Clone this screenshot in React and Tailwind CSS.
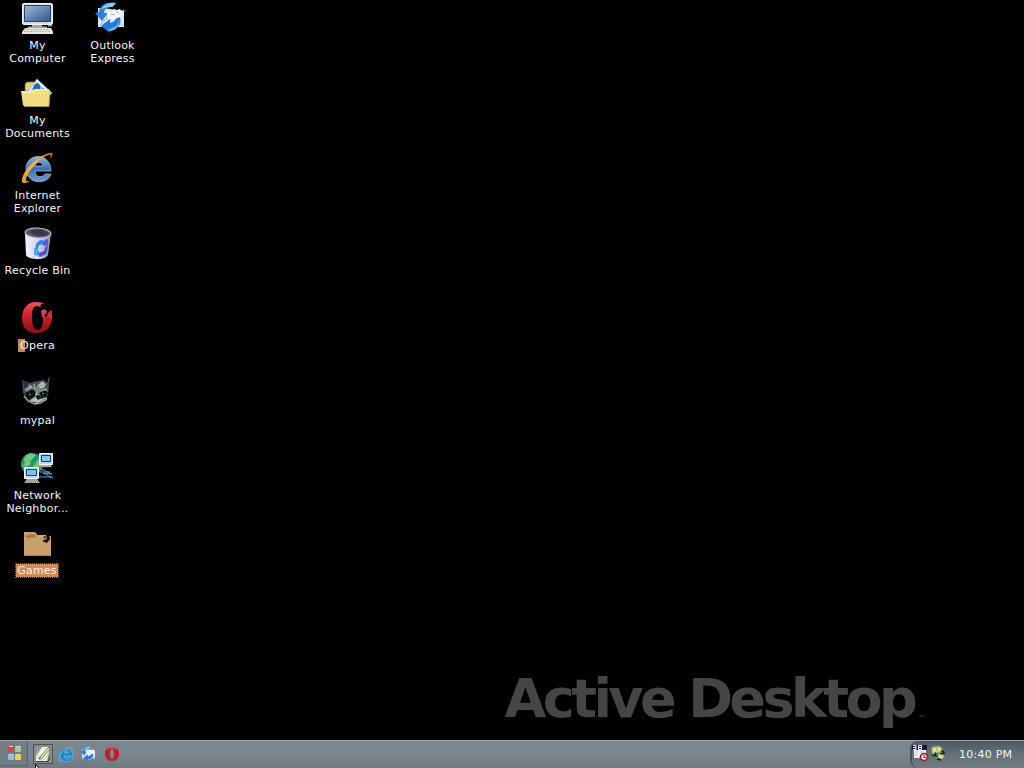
import React from "react";

const Svg = ({ children, className = "h-8 w-8", box = "0 0 32 32" }) => (
  <svg viewBox={box} className={`block shrink-0 overflow-visible ${className}`}>{children}</svg>
);

const Computer = () => (
  <Svg>
    <defs>
      <linearGradient id="screen" x1="0" y1="0" x2="1" y2="1">
        <stop stopColor="#9fb9d6" /><stop offset=".5" stopColor="#6688b4" /><stop offset="1" stopColor="#305686" />
      </linearGradient>
    </defs>
    <rect x="1.5" y="1.5" width="30" height="21" rx="1.5" fill="#d9dedc" stroke="#f4f4ee" />
    <path d="M3.5 3.5h26v16h-26z" fill="url(#screen)" stroke="#26405f" />
    <path d="M11 23h10v1.500h5v1.500H7v-1.500h4z" fill="#a4a69f" />
    <path d="M4 26h26l2 4v2H1v-2z" fill="#e8e8df" />
    <path d="M4 27.500h25M3 29.500h27" stroke="#b0b1a9" strokeDasharray="2 1" />
    <path d="M27 23h4v1.500h-4z" fill="#8da38a" />
  </Svg>
);

const OutlookArt = () => (
  <>
    <path d="M4 6h7l15 3 4-1v17H4z" fill="#dbe6fb" />
    <path d="m5 24 8-8m16 8-7-7M5 7l8 8" stroke="#9bb3e0" fill="none" />
    <path d="M22 1C14-1 6 2 5 10l-4 1 7 8 6-8h-4c0-4 4-6 9-6z" fill="#2f80dc" />
    <path d="M22 1C15 0 9 3 7 8c4-3 7-3 11-3z" fill="#8cc8fb" />
    <path d="M26 15c2 8-3 13-10 14v2l-9-7 9-7v4c4-1 6-3 6-7z" fill="#2579d8" />
    <path d="M25 17c0 6-4 9-10 10l1 2c7-1 10-6 9-12z" fill="#79bdf8" />
    <path d="m13 11 5-2 2-2 3 1 3-1 2 3-1 5-4 1-3 2-6-2z" fill="#fafaff" />
    <path d="m17 12 4 1m1-4 3 3" stroke="#9aa7bd" fill="none" />
  </>
);
const Outlook = () => (
  <Svg>
    <OutlookArt />
    <path d="M31 7v3" stroke="#354052" />
  </Svg>
);

const Documents = () => (
  <Svg>
    <path d="M4 14V7l2-2h7l3 3v7z" fill="#e5d477" stroke="#776c36" strokeWidth=".7" />
    <path d="m7 14 9-12 15 14-5 5z" fill="#e9f4fc" stroke="#9ab1c9" strokeWidth=".7" />
    <path d="m10 13 6-8 9 9-3 3z" fill="#83b5dd" />
    <path d="m13 8 3-2 3 2v4l-3 2-4-2z" fill="#246baa" />
    <path d="m22 11 4 4M21 13l5 5" stroke="#5f7f9c" />
    <path d="M0 14h11l3-2h14l1 3-1 14-1 1H4l-2-2z" fill="#f1df84" />
    <path d="M1 15h11l3-2h12" stroke="#fff7bd" fill="none" />
    <path d="M4 29.5h24l1-14" stroke="#a28e3f" fill="none" />
    <path d="M3 18h24M4 21h23M4 24h23M5 27h21" stroke="#e1ca69" strokeDasharray="1 2" />
  </Svg>
);

const Explorer = () => (
  <Svg>
    <defs>
      <linearGradient id="ieBlue" x2="0" y2="1"><stop stopColor="#87b3e6" /><stop offset=".5" stopColor="#3e6eac" /><stop offset="1" stopColor="#6f9ed5" /></linearGradient>
      <linearGradient id="orbit" x1="1" x2="0" y2="1"><stop stopColor="#b8651d" /><stop offset=".5" stopColor="#ffc75a" /><stop offset="1" stopColor="#e18b21" /></linearGradient>
    </defs>
    <path d="M30 19H14c0 7 8 7 10 3h6c-4 12-25 10-25-5C5 0 30 0 30 19M14 14h8c-1-5-7-5-8 0" fill="url(#ieBlue)" fillRule="evenodd" stroke="#a6c4e9" strokeWidth=".7" />
    <path d="M29 7c3-4 4-7 0-6C21 2 6 13 2 24c-3 7 0 9 7 5-4 1-5 0-3-5C10 15 20 5 28 3c2-1 2 1 1 4" fill="url(#orbit)" />
    <path d="M4 30C-2 29 8 12 22 4" stroke="#f6a341" fill="none" strokeWidth="1.4" />
  </Svg>
);

const Recycle = () => (
  <Svg>
    <defs><linearGradient id="bin"><stop stopColor="#f5f3ff" /><stop offset=".55" stopColor="#d4d1e4" /><stop offset="1" stopColor="#8a879f" /></linearGradient></defs>
    <path d="M4 6 5 28c2 5 19 6 22 0l3-21z" fill="url(#bin)" />
    <ellipse cx="17" cy="6" rx="13" ry="5" fill="#5b5869" stroke="#c8c4da" transform="rotate(3 17 6)" />
    <path d="M8 5c5-4 15-4 20 2-5 3-14 3-20-2" fill="#3b3947" />
    <path d="m15 17 4-4 6 1 1 4-4-1-4 1-1 4-3 2z" fill="#258ced" />
    <path d="m25 19 2 1-2 7-6 3-4-3 3-3v2l5-2z" fill="#4a4ed2" />
    <path d="M13 21v7l6 1-2-3 1-3z" fill="#48a9f4" />
    <path d="m24 13 3-1v7l-6-1z" fill="#535bdd" />
  </Svg>
);

const Opera = () => (
  <Svg>
    <defs><linearGradient id="opera" x2="0" y2="1"><stop stopColor="#e8595b" /><stop offset=".4" stopColor="#ce2228" /><stop offset="1" stopColor="#8c0d16" /></linearGradient></defs>
    <path fillRule="evenodd" d="M15 0C6 0 1 7 1 16s5 15 14 15 16-6 16-15C31 6 25 0 15 0m1 4c4 0 6 5 6 12 0 8-2 12-5 12-4 0-6-5-6-12 0-8 1-12 5-12" fill="url(#opera)" />
    <path d="M20 2 28 1l4 7-4 3-3 4-3-3-3-5z" fill="#080304" />
    <path d="m20 9 3-2 3 2-1 3-2 1 1 3-3-1z" fill="#c84a56" />
    <path d="m26 14 1-4 1 1 1-3 2 1v8z" fill="#d22e37" />
  </Svg>
);

const Raccoon = () => (
  <Svg>
    <path d="m1 3 8 3 8-2 6-1 5 3-1 13-4 5-8 2-8-3-5-7z" fill="#465252" />
    <path d="m1 3 7 3-4 6zm18 2 7-1-2 6z" fill="#253244" />
    <path d="m5 12 5-4 4 4 3-5 2 6 6-2 2 4-5 5-7-3-3 2-6-1z" fill="#7b8783" />
    <path d="m4 16 7-4 4 3-1 4-6 4-3-3zm14 0 5-3 4 2-1 5-5 1z" fill="#0e1215" />
    <path d="m15 14 2 6 6 3-6 3-9-2 6-4z" fill="#b9bfae" />
    <path d="m14 19 4-1 3 3-4 2z" fill="#171b20" />
    <path d="m3 19 4 5 7 3 6-1 6-4M8 8l3 3m2-4 1 5m-10 1 5-3m11 4 6-2M21 22l5-1" stroke="#a4aca4" strokeWidth="1.3" fill="none" />
    <path d="m17 8 4-4 4 3-2 4-4 1z" fill="#a8b5b4" />
    <path d="M29 1q-3 1-1 4" stroke="#777d79" fill="none" />
    <path d="m8 17 2 1m11-2 2 1" stroke="#929b9f" />
  </Svg>
);

const Network = () => (
  <Svg>
    <circle cx="11" cy="12" r="11" fill="#269476" />
    <path d="M3 6 9 1l6 2-5 5-1 5-5 2zm9 9 6-9 4 6-5 4z" fill="#6dcc68" />
    <path d="m5 3 5 4 4-4M1 14l8-3" stroke="#8ec1d4" fill="none" />
    <path d="M18.500 1.500h13v11h-13z" fill="#c8d1df" stroke="#eef2f5" />
    <path d="M20.500 3.500h9v6h-9z" fill="#82c8ed" stroke="#193a6a" />
    <path d="M20 13h10l1 2H18z" fill="#b5b2a4" />
    <path d="M3.500 15.500h14v11h-14z" fill="#cdd7e3" stroke="#eff6fa" />
    <path d="M5.500 17.500h10v6h-10z" fill="#75c6ef" stroke="#183d79" />
    <path d="M6 27h10l3 4H3z" fill="#b5b7ad" />
    <path d="M4 30h14M19 15h10M5 28h11" stroke="#656961" strokeDasharray="1 1" />
    <path d="m20 17 11 5-9-1 10 5M19 20h10M18 25h13" stroke="#6294cd" fill="none" />
  </Svg>
);

const Games = () => (
  <Svg>
    <path d="M3 5h11l3 3h13v21H3z" fill="#c7a06c" />
    <path d="m5 8 8-1 4 3-5 2-7 1z" fill="#a27c4e" />
    <path d="m4 12 9-1 5-2h11" stroke="#d6b47f" fill="none" />
    <path d="M16 4h15v5h-3V8H16zM28 8l1 4-3 4-5-2 5-2-1-4z" fill="#0b0706" />
    <path d="M22 9h3l1 4-3-1z" fill="#76502f" />
    <path d="M3 28.5h27" stroke="#a88253" />
  </Svg>
);

const items = [
  ["My Computer", Computer], ["My Documents", Documents], ["Internet Explorer", Explorer],
  ["Recycle Bin", Recycle], ["Opera", Opera], ["mypal", Raccoon],
  ["Network Neighbor...", Network], ["Games", Games], ["Outlook Express", Outlook],
];

function DesktopItem({ name, Icon }) {
  const label = name === "Games"
    ? "mr-px bg-[#d18a50] outline outline-1 outline-dotted outline-[#a96832] px-[1px]"
    : name === "Opera" ? "bg-linear-to-r from-[#c28b52] from-[7px] to-transparent to-[7px] px-[2px]" : "";
  return (
    <div className="flex flex-col items-center pt-[2px]">
      <div className={name === "Outlook Express" ? "mr-[5px]" : "mr-px"}><Icon /></div>
      <div className={`mt-[5px] max-w-[75px] text-center text-[11px] leading-[13px] tracking-[0.22px] ${label}`}>
        {name === "Recycle Bin" ? name : name.split(" ").map((word) => <div key={word}>{word}</div>)}
      </div>
    </div>
  );
}

function Taskbar() {
  return (
    <footer className="flex h-7 items-center border-t border-[#a2a8ad] bg-linear-to-b from-[#7c858c] via-[#7c868e] to-[#6f7981]">
      <button className="flex h-[25px] w-7 items-center justify-center self-start border-r border-b border-[#596168] bg-[#747d83] pl-px">
        <Svg className="h-[15px] w-[15px]" box="0 0 15 15">
          <rect x="1" width="6" height="6" rx="1" fill="#c9484f" /><rect x="8" width="6" height="6" rx="1" fill="#a7c998" />
          <rect x="1" y="8" width="6" height="6" rx="1" fill="#9ab9eb" /><rect x="8" y="8" width="6" height="6" rx="1" fill="#f0ce53" />
          <path d="M2 .5h4M9 .5h4M2 8.5h4M9 8.5h4" stroke="#ddd8cc" />
        </Svg>
      </button>
      <div className="ml-[5px] flex items-center gap-[3px] pb-px">
        <div className="flex h-5 w-5 items-center justify-center border border-[#4b5359] bg-[#8a8d86]">
          <Svg className="h-4 w-4" box="0 0 16 16">
            <path d="M1 1h14L12 15H1z" fill="#f0f0e4" />
            <path d="M1 1h6L2 9H1z" fill="#8e9da2" />
            <path d="M3 9c0 8 9 5 10-1" stroke="#c1c8ad" fill="none" />
            <path d="m5 11 9-10 1 2-8 9-3 1z" fill="#fff4b0" stroke="#42422c" strokeWidth=".8" />
            <path d="M1 15.500h12l2-5" stroke="#39474f" fill="none" />
          </Svg>
        </div>
        <Svg className="h-[18px] w-5" box="0 0 20 18">
          <path d="M17 11H8c0 4 5 4 7 1h2C15 19 4 18 4 10S16 1 17 11M8 8h5c-1-3-5-3-5 0" fill="#1685cf" fillRule="evenodd" stroke="#53b6e9" strokeWidth=".8" />
          <path d="M16 6c3-7-8-2-12 4-3 5-1 7 3 5" stroke="#64b8e4" fill="none" />
        </Svg>
        <Svg className="ml-[1px] h-4 w-4" box="0 0 32 32"><OutlookArt /></Svg>
        <Svg className="ml-[5px] h-4 w-4" box="0 0 16 16">
          <path fillRule="evenodd" d="M8 1C3 1 1 4 1 8s3 7 7 7 7-3 7-7-2-7-7-7m0 2c1.500 0 2 2 2 5s-.5 5-2 5-2-2-2-5 .5-5 2-5" fill="#c51a24" />
          <path d="M3 4Q8-1 13 4" stroke="#d96567" fill="none" />
        </Svg>
      </div>
      <div className="ml-auto flex h-full w-[114px] items-center rounded-l-lg border-l-2 border-[#485158] bg-linear-to-b from-[#4e585f] via-[#667079] to-[#717c85] pb-px">
        <Svg className="mb-[2px] h-[18px] w-4" box="0 0 16 18">
          <path d="M2 3h12v11H2z" fill="#eef1fa" /><path d="M0 1h15v5H0z" fill="#151941" />
          <path d="M1 1.500h3v4H1m0-2h3M6.500 1.500h3v4h-3v-4m0 2h3" stroke="#f2f4ff" fill="none" />
          <path d="M3 8h3m2 0h3m-8 3h3" stroke="#b0b8d5" />
          <circle cx="12" cy="13" r="3.500" fill="#fff3ef" stroke="#a51a2c" strokeWidth="1.7" />
          <path d="M12 10.500v3h2" stroke="#821426" fill="none" />
        </Svg>
        <Svg className="mb-[2px] ml-[2px] h-4 w-4" box="0 0 16 16">
          <path d="M1 2 5 0l6 1 3 4-1 4 2 3-5 3-5-2-4-5z" fill="#6c8b60" />
          <path d="m2 3 4-1 1 5-4 2zm6-2 4 3-3 4-2-2zm2 8 4 2-2 3-4-2z" fill="#d8dfb5" />
          <path d="m2 10 4 1-1-4m7-2 2 3-4 1M7 14l4 1" stroke="#101f1d" strokeWidth="1.500" fill="none" />
          <path d="m6 2 3 4-4 1m4 2 3 2" stroke="#e0cb4b" strokeWidth="1.5" fill="none" />
        </Svg>
        <time className="ml-[13px] whitespace-nowrap text-[11px] leading-[13px] tracking-[0.25px]">10:40 PM</time>
      </div>
    </footer>
  );
}

export default function App() {
  return (
    <div className="relative flex h-screen w-full flex-col overflow-hidden bg-black font-['DejaVu_Sans',sans-serif] text-[#f4f4f4]">
      <main className="flex min-h-0 flex-1 flex-col justify-between">
        <div className="grid grid-flow-col grid-rows-[repeat(8,75px)] justify-start auto-cols-[75px]">
          {items.map(([name, Icon]) => <DesktopItem key={name} name={name} Icon={Icon} />)}
        </div>
        <div className="mb-[9px] flex items-end self-end pr-[98px] text-[#454545]">
          <span className="whitespace-nowrap text-[54px] leading-[64px] font-bold tracking-[-3.6px]">Active Desktop</span>
          <span className="mb-[8px] ml-[4px] text-[8px] leading-[8px]">™</span>
        </div>
      </main>
      <Taskbar />
      <Svg className="absolute top-[764px] left-[35px] h-4 w-3" box="0 0 12 16">
        <path d="M.5.5v13l3-3 2 5 2-1-2-5h4z" fill="#fff" stroke="#000" />
      </Svg>
    </div>
  );
}
